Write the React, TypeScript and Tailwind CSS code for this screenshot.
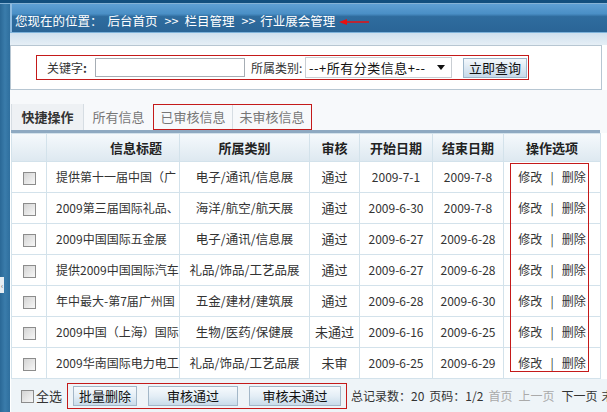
import React from "react";

const ROWS = [
  { title: "提供第十一届中国（广", cat: "电子/通讯/信息展", audit: "通过", start: "2009-7-1", end: "2009-7-8" },
  { title: "2009第三届国际礼品、", cat: "海洋/航空/航天展", audit: "通过", start: "2009-6-30", end: "2009-7-8" },
  { title: "2009中国国际五金展", cat: "电子/通讯/信息展", audit: "通过", start: "2009-6-27", end: "2009-6-28" },
  { title: "提供2009中国国际汽车", cat: "礼品/饰品/工艺品展", audit: "通过", start: "2009-6-27", end: "2009-6-28" },
  { title: "年中最大-第7届广州国", cat: "五金/建材/建筑展", audit: "通过", start: "2009-6-28", end: "2009-6-30" },
  { title: "2009中国（上海）国际", cat: "生物/医药/保健展", audit: "未通过", start: "2009-6-16", end: "2009-6-25" },
  { title: "2009华南国际电力电工", cat: "礼品/饰品/工艺品展", audit: "未审", start: "2009-6-25", end: "2009-6-29" },
];

function Checkbox() {
  return (
    <span className="inline-block h-[13px] w-[13px] shrink-0 border border-[#8c8c8c] bg-gradient-to-br from-[#d4d4d4] to-[#f7f7f7] align-middle" />
  );
}

function Button({ label, width }: { label: string; width: string }) {
  return (
    <button
      type="button"
      className={`${width} h-[20px] shrink-0 border border-[#a3b7c8] bg-gradient-to-b from-[#f6fafd] via-[#e4eef6] to-[#c9dcea] text-[13px] leading-[18px] text-[#111]`}
    >
      {label}
    </button>
  );
}

export default function App() {
  const cell = "border border-[#d3e2eb] text-center";
  return (
    <div className="relative flex h-[412px] w-[607px] flex-col overflow-hidden bg-white text-[12px] text-[#333] [font-family:'Noto_Sans_CJK_SC',sans-serif]">
      <div className="h-[3px] shrink-0 bg-[#124f7e]" />
      <div className="h-px shrink-0 bg-[#86b3d6]" />
      <div className="flex min-h-0 flex-1">
        {/* left frame strip */}
        <div className="relative w-[10px] shrink-0 bg-gradient-to-r from-[#2a6896] via-[#3a7cab] to-[#2f6f9e]">
          <div className="absolute left-0 top-[273px] flex h-[16px] w-[4px] items-center justify-center bg-[#e8eef3] text-[7px] leading-none text-[#555]">
            ‹
          </div>
        </div>

        <div className="flex min-w-0 flex-1 flex-col">
          {/* location bar */}
          <div className="flex h-[28px] shrink-0 items-center whitespace-nowrap border-l-2 border-[#8ebbe0] bg-[linear-gradient(to_bottom,#5fa0d4_0%,#4a8fc6_35%,#2f6c9e_45%,#2a6597_100%)] pl-[3px] pt-[7px] text-[12.5px] text-white">
            <span>您现在的位置：</span>
            <span className="ml-[5px]">后台首页</span>
            <span className="ml-[7px]">&gt;&gt;</span>
            <span className="ml-[6px]">栏目管理</span>
            <span className="ml-[7px]">&gt;&gt;</span>
            <span className="ml-[5px]">行业展会管理</span>
            <svg width="30" height="8" viewBox="0 0 30 8" className="ml-[4px]">
              <polygon points="0,4 8,1 8,7" fill="#e81010" />
              <line x1="7" y1="4" x2="30" y2="4" stroke="#e81010" strokeWidth="1.5" />
            </svg>
          </div>
          <div className="h-px shrink-0 bg-[#7eb2da]" />
          <div className="h-[12px] shrink-0 bg-gradient-to-b from-[#cfe0ee] to-[#e6eff6]" />

          {/* search panel */}
          <div className="w-[592px] shrink-0 border border-[#b7c6d2] bg-white px-[25px] py-[9px]">
            <div className="flex h-[25px] w-[493px] items-center whitespace-nowrap border border-[#c41a1a] pl-[10px]">
              <span className="w-[40px] shrink-0">
                关键字<b>:</b>
              </span>
              <span className="ml-[8px] h-[19px] w-[150px] shrink-0 border border-[#a6adb4] bg-white" />
              <span className="ml-[6px] w-[52px] shrink-0">所属类别:</span>
              <span className="ml-[2px] flex h-[21px] w-[147px] shrink-0 items-center justify-between border border-[#c9ced3] bg-white pl-[3px] pr-[6px] text-[13px] text-[#111]">
                <span className="tracking-[0.5px]">--+所有分类信息+--</span>
                <svg width="8" height="5" viewBox="0 0 8 5">
                  <polygon points="0,0 8,0 4,5" fill="#111" />
                </svg>
              </span>
              <span className="ml-[11px] flex h-[20px] w-[64px] shrink-0 items-center justify-center border border-[#9db6ca] bg-gradient-to-b from-[#f4f8fc] to-[#c6d9e9] text-[13px] text-[#111]">
                立即查询
              </span>
            </div>
          </div>

          {/* tabs */}
          <div className="shrink-0 bg-[#f7f9fb] pl-px pt-[14px]">
            <div className="flex h-[26px] w-[589px] items-stretch text-[13px]">
              <div className="flex w-[72px] items-center justify-center border-l border-[#d6dde3] bg-[#eef1f4] font-bold text-[#333]">
                快捷操作
              </div>
              <div className="flex w-[70px] items-center justify-center border-l border-[#d6dde3] text-[#777]">
                所有信息
              </div>
              <div className="flex w-[159px] border border-[#c41a1a]">
                <div className="flex flex-1 items-center justify-center text-[#777]">已审核信息</div>
                <div className="flex flex-1 items-center justify-center border-l border-[#d6dde3] text-[#777]">
                  未审核信息
                </div>
              </div>
            </div>
            <div className="h-[3px] w-[589px] bg-[#8ea9c1]" />
          </div>

          {/* table */}
          <div className="relative shrink-0 pl-px">
            <table className="w-[589px] table-fixed border-collapse">
              <colgroup>
                <col className="w-[35px]" />
                <col className="w-[133px]" />
                <col className="w-[130px]" />
                <col className="w-[50px]" />
                <col className="w-[73px]" />
                <col className="w-[71px]" />
                <col className="w-[97px]" />
              </colgroup>
              <thead>
                <tr className="h-[28px] bg-gradient-to-b from-[#f5f9fc] to-[#dde8f0] text-[13px] font-bold text-[#222]">
                  <th className={cell} />
                  <th className="border border-[#d3e2eb] pl-[63px] text-left">信息标题</th>
                  <th className={cell}>所属类别</th>
                  <th className={cell}>审核</th>
                  <th className={cell}>开始日期</th>
                  <th className={cell}>结束日期</th>
                  <th className={cell}>操作选项</th>
                </tr>
              </thead>
              <tbody>
                {ROWS.map((r) => (
                  <tr key={r.title} className="h-[31px]">
                    <td className={cell}>
                      <Checkbox />
                    </td>
                    <td className="overflow-hidden whitespace-nowrap border border-[#d3e2eb] pl-[9px] text-left">
                      {r.title}
                    </td>
                    <td className={`${cell} whitespace-nowrap text-[12.5px]`}>{r.cat}</td>
                    <td className={`${cell} text-[13px]`}>{r.audit}</td>
                    <td className={cell}>{r.start}</td>
                    <td className={cell}>{r.end}</td>
                    <td className={`${cell} whitespace-nowrap`}>
                      修改<span className="mx-[8px]">|</span>删除
                    </td>
                  </tr>
                ))}
              </tbody>
            </table>
            {/* annotation box around the action column */}
            <div className="pointer-events-none absolute left-[500px] top-[30px] h-[209px] w-[79px] border border-[#c41a1a]" />
          </div>

          {/* footer */}
          <div className="ml-px flex h-[34px] w-[596px] shrink-0 items-center whitespace-nowrap bg-[#eef4f8] pl-[10px]">
            <Checkbox />
            <span className="ml-[2px] text-[13px]">全选</span>
            <div className="ml-[5px] flex h-[26px] w-[280px] shrink-0 items-center gap-[11px] border border-[#c41a1a] pl-[5px]">
              <Button label="批量删除" width="w-[64px]" />
              <Button label="审核通过" width="w-[90px]" />
              <Button label="审核未通过" width="w-[92px]" />
            </div>
            <span className="ml-[4px]">总记录数：20</span>
            <span className="ml-[5px]">页码：1/2</span>
            <span className="ml-[5px] text-[#aaa]">首页</span>
            <span className="ml-[6px] text-[#aaa]">上一页</span>
            <span className="ml-[7px]">下一页</span>
            <span className="ml-[4px]">末页</span>
          </div>
        </div>
      </div>
    </div>
  );
}
